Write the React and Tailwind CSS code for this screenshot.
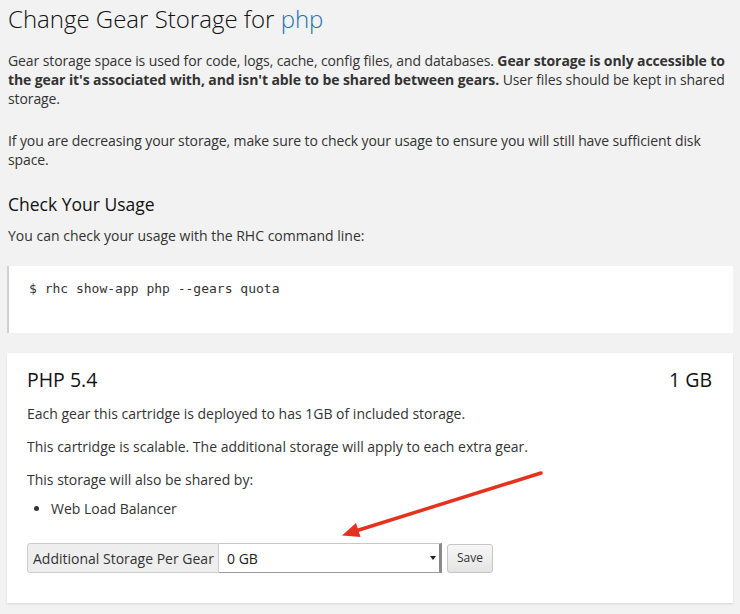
import React from 'react';

const Arrow = () => (
    <svg className="absolute left-0 top-0 pointer-events-none" width="740" height="614" viewBox="0 0 740 614">
        <line x1="541" y1="473" x2="354" y2="531.5" stroke="#e5321f" strokeWidth="3.5" strokeLinecap="round" />
        <polygon points="342,535.5 356,523 360.5,537" fill="#e5321f" />
    </svg>
);

const App = () => {
    return (
        <div className="relative min-h-screen w-full bg-[#f2f2f2] px-[7px] pb-[11px] text-[#333] font-['Open_Sans',sans-serif]">
            <h1 className="pt-[4px] pl-px text-[24px] leading-[30px] font-light text-[#111]">
                Change Gear Storage for <span className="text-[#1f72ae]">php</span>
            </h1>

            <p className="mt-[17px] pl-px text-[14px] leading-[19px] tracking-[-0.1px]">
                Gear storage space is used for code, logs, cache, config files, and databases. <strong className="font-bold">Gear storage is only accessible to the gear it's associated with, and isn't able to be shared between gears.</strong> User files should be kept in shared storage.
            </p>
            <p className="mt-[23px] pl-px text-[14px] leading-[19px] tracking-[-0.1px]">
                If you are decreasing your storage, make sure to check your usage to ensure you will still have sufficient disk space.
            </p>

            <h3 className="mt-[23px] pl-px text-[17.5px] leading-[24px] text-[#111]">Check Your Usage</h3>
            <p className="mt-[10px] pl-px text-[14px] leading-[19px]">You can check your usage with the RHC command line:</p>

            <pre className="mt-[21px] h-[67px] border-l-2 border-[#d0d0d0] bg-white pl-[20px] pt-[13px] text-[13px] leading-[19px] font-['DejaVu_Sans_Mono',monospace] text-[#333]">$ rhc show-app php --gears quota</pre>

            <div className="mt-[20px] bg-white pt-[14px] pl-[20px] pr-[21px] pb-[30px] shadow-[0_1px_2px_rgba(0,0,0,0.12)]">
                <div className="flex items-baseline justify-between text-[19.5px] leading-[26px] text-[#111]">
                    <span>PHP 5.4</span>
                    <span>1 GB</span>
                </div>
                <p className="mt-[11px] text-[14px] leading-[19px]">Each gear this cartridge is deployed to has 1GB of included storage.</p>
                <p className="mt-[14px] text-[14px] leading-[19px]">This cartridge is scalable. The additional storage will apply to each extra gear.</p>
                <p className="mt-[14px] text-[14px] leading-[19px]">This storage will also be shared by:</p>
                <ul className="mt-[10px] pl-[24px] list-disc text-[14px] leading-[19px]">
                    <li>Web Load Balancer</li>
                </ul>

                <div className="mt-[25px] flex items-center">
                    <div className="flex h-[30px] items-stretch">
                        <span className="flex w-[192px] items-center rounded-l-[3px] border border-[#ccc] bg-[#eee] pl-[5px] text-[14px] text-[#333]">
                            Additional Storage Per Gear
                        </span>
                        <div className="relative flex w-[223px] items-center border-y border-l-0 border-[#c8c8c8] border-r-[3px] border-r-[#8a8a8a] border-b-[#9a9a9a] bg-white pl-[8px] text-[14px] text-[#222]">
                            0 GB
                            <span className="absolute right-[3px] top-1/2 -translate-y-1/2 h-0 w-0 border-x-[3px] border-t-[4px] border-x-transparent border-t-[#222]" />
                        </div>
                    </div>
                    <button className="ml-[5px] h-[29px] w-[46px] rounded-[3px] border border-[#c6c6c6] bg-gradient-to-b from-[#f7f7f7] to-[#e4e4e4] text-[12px] text-[#333]">
                        Save
                    </button>
                </div>
            </div>

            <Arrow />
        </div>
    );
};

export default App;
